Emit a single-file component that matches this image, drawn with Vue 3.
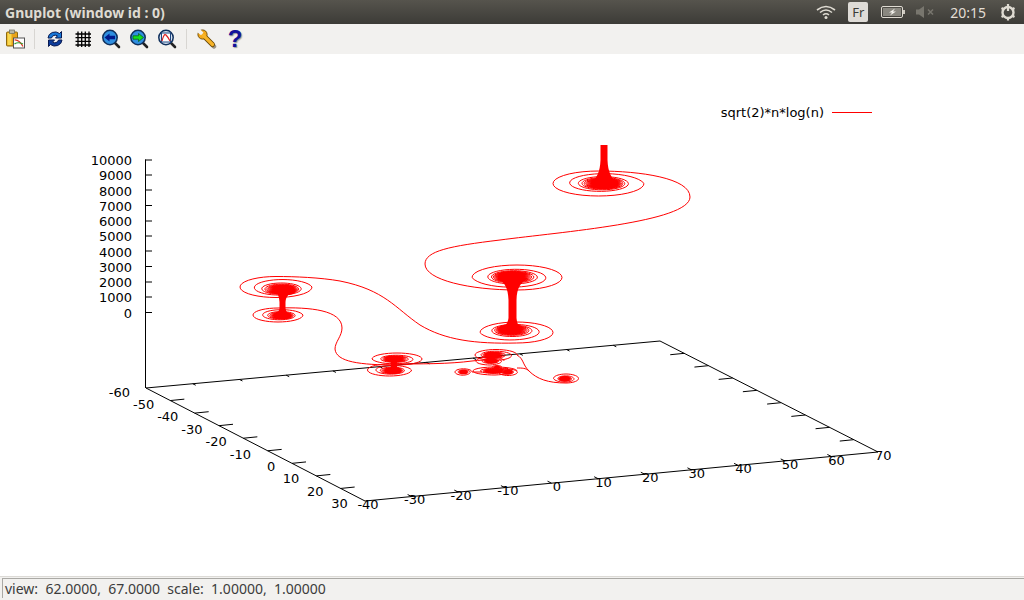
<template>
  <div class="screen">
    <!-- unity top panel -->
    <div class="panel">
      <span class="title">Gnuplot (window id : 0)</span>
      <div class="indicators">
        <svg class="wifi" width="20" height="16" viewBox="0 0 20 16">
          <path d="M1 6 Q10 -1 19 6" />
          <path d="M4 8.500 Q10 3.500 16 8.500" />
          <path d="M7 11 Q10 8.500 13 11" />
          <circle cx="10" cy="13.500" r="1.500" />
        </svg>
        <span class="lang">Fr</span>
        <svg class="battery" width="24" height="14" viewBox="0 0 24 14">
          <rect x="0.500" y="1.500" width="21" height="11" rx="1.500" class="batt-body" />
          <rect x="2" y="3" width="18" height="8" class="batt-fill" />
          <rect x="22" y="5" width="2" height="4" class="batt-tip" />
          <path d="M14 3.500 L8 7.500 L11 7.500 L9 10.500 L15 6.500 L12 6.500 Z" class="batt-bolt" />
        </svg>
        <svg class="sound" width="20" height="14" viewBox="0 0 20 14">
          <path d="M0 4.500 H3 L8 1 V13 L3 9.500 H0 Z" />
          <path d="M12 4.500 L17 9.500 M17 4.500 L12 9.500" class="mute" />
        </svg>
        <span class="clock">20:15</span>
        <svg class="power" width="18" height="18" viewBox="0 0 18 18">
          <circle cx="9" cy="9.500" r="5.500" class="gear-ring" />
          <path d="M9 1 V8 M2.500 5 L4.500 6.200 M15.500 5 L13.500 6.200 M2.500 14 L4.500 12.800 M15.500 14 L13.500 12.800 M9 15 V17.500" class="gear-teeth" />
        </svg>
      </div>
    </div>

    <!-- gnuplot toolbar -->
    <div class="toolbar">
      <button class="tool">
        <svg width="20" height="20" viewBox="0 0 20 20">
          <rect x="1.500" y="3" width="11" height="14" rx="1" fill="#e8a317" stroke="#8a6a10" />
          <rect x="2.500" y="4" width="4" height="12" fill="#f8d850" />
          <rect x="4.500" y="1" width="5" height="3.500" fill="#b8b8a8" stroke="#6a6a5a" stroke-width="0.700" />
          <rect x="8.500" y="9" width="11" height="10" fill="#fff" stroke="#555" />
          <path d="M9.500 11 Q14 10.500 18 17.500" fill="none" stroke="#e03020" stroke-width="1.200" />
          <path d="M9.500 15 Q13 12.500 18 15" fill="none" stroke="#30a030" stroke-width="1.200" />
        </svg>
      </button>
      <span class="sep"></span>
      <button class="tool">
        <svg width="20" height="20" viewBox="0 0 20 20">
          <path d="M3 9 A7 6.500 0 0 1 14.500 4.500 L16.500 2.500 V9 H10.500 L12.500 6.800 A4 4 0 0 0 6.500 9 Z" fill="#1878d8" stroke="#0a1a50" />
          <path d="M17 11 A7 6.500 0 0 1 5.500 15.500 L3.500 17.500 V11 H9.500 L7.500 13.200 A4 4 0 0 0 13.500 11 Z" fill="#0c3c9c" stroke="#0a1a50" />
        </svg>
      </button>
      <button class="tool">
        <svg width="20" height="20" viewBox="0 0 20 20">
          <path d="M5 2.500 V18 M8.700 2.500 V18 M12.300 2.500 V18 M16 2.500 V18 M2.500 5 H18 M2.500 8.700 H18 M2.500 12.300 H18 M2.500 16 H18" fill="none" stroke="#000" stroke-width="1.300" />
        </svg>
      </button>
      <button class="tool" v-for="lens in lenses" :key="lens">
        <svg width="20" height="20" viewBox="0 0 20 20">
          <path d="M13 13 L18 18" stroke="#222" stroke-width="2.600" stroke-linecap="round" />
          <circle cx="9" cy="8.500" r="7.200" :fill="lens === 'view' ? '#d8e4f4' : '#2f8fe0'" stroke="#10305c" stroke-width="1.500" />
          <path v-if="lens === 'back'" d="M3.500 8.500 L8.500 4.500 V6.800 H14 V10.200 H8.500 V12.500 Z" fill="#001a8c" />
          <path v-if="lens === 'forward'" d="M14.500 8.500 L9.500 4.500 V6.800 H4 V10.200 H9.500 V12.500 Z" fill="#12e020" stroke="#0a5a10" stroke-width="0.700" />
          <template v-if="lens === 'view'">
            <rect x="4.500" y="4" width="9" height="9" fill="#fff" stroke="#204880" />
            <path d="M5 12 Q7 4 9 6 T13 12" fill="none" stroke="#e02020" stroke-width="1.200" />
          </template>
        </svg>
      </button>
      <span class="sep"></span>
      <button class="tool">
        <svg width="20" height="20" viewBox="0 0 20 20">
          <path d="M7.500 8 L17 17.500" stroke="#9a9488" stroke-width="4.500" stroke-linecap="round" />
          <path d="M6.500 6.500 L15.500 15.500" stroke="#6a4a08" stroke-width="5" stroke-linecap="round" />
          <circle cx="5.500" cy="5.500" r="4.600" fill="#f4a818" stroke="#6a4a08" stroke-width="0.900" />
          <path d="M6.500 6.500 L15.500 15.500" stroke="#f8b428" stroke-width="3.200" stroke-linecap="round" />
          <path d="M0 1 L3 0 L6.500 3.800 L4 6.200 L0 3 Z" fill="#f2f1ef" />
        </svg>
      </button>
      <button class="tool"><span class="help">?</span></button>
    </div>

    <!-- plot canvas -->
    <div class="plot">
      <svg width="1024" height="522" viewBox="0 54 1024 522">
        <g class="axes">
          <path :d="axesPath" />
        </g>
        <g class="labels">
          <text v-for="t in zLabels" :key="'z' + t.text" :x="132" :y="t.y" text-anchor="end">{{ t.text }}</text>
          <text v-for="t in yLabels" :key="'y' + t.text" :x="t.x" :y="t.y" text-anchor="end">{{ t.text }}</text>
          <text v-for="t in xLabels" :key="'x' + t.text" :x="t.x" :y="t.y" text-anchor="middle">{{ t.text }}</text>
          <text x="824" y="116.500" text-anchor="end">sqrt(2)*n*log(n)</text>
        </g>
        <path class="curve" d="M832 112.500 H872" />
        <g class="blobs">
          <path v-for="(t, i) in towers" :key="'t' + i" :d="t" />
          <ellipse v-for="(b, i) in cores" :key="'c' + i" :cx="b.cx" :cy="b.cy" :rx="b.rx" :ry="b.ry" />
        </g>
        <path class="curve" :d="connectors" />
        <path v-for="(s, i) in spirals" :key="'s' + i" class="curve" :d="s" />
      </svg>
    </div>

    <div class="statusbar">
      <div class="status-inner">{{ statusText }}</div>
    </div>
  </div>
</template>

<script setup>
const lenses = ['back', 'forward', 'view']
const statusText = 'view:  62.0000,  67.0000  scale:  1.00000,  1.00000'

// plot base corners, screen coordinates
const A = [146, 388]
const B = [660, 341]
const C = [878, 452]
const D = [365, 501]

function lerp(p, q, t) {
  return [p[0] + (q[0] - p[0]) * t, p[1] + (q[1] - p[1]) * t]
}

function buildAxes() {
  let d = `M${A} L${B} L${C} L${D} Z M145.500 388 V159.500`
  for (const y of [160, 175, 190, 205.500, 221, 236, 251, 266.500, 282, 297, 312.500]) {
    d += ` M145 ${y} H152`
  }
  for (let k = 1; k < 9; k++) {
    const p = lerp(A, D, k / 9)
    d += ` M${p} l14 -1.400`
    const q = lerp(B, C, k / 9)
    d += ` M${q} l-14 1.400`
  }
  for (let k = 1; k < 11; k++) {
    const p = lerp(D, C, k / 11)
    d += ` M${p} l-4 -2`
    const q = lerp(A, B, k / 11)
    d += ` M${q} l3 1.500`
  }
  return d
}
const axesPath = buildAxes()

const zLabels = [10000, 9000, 8000, 7000, 6000, 5000, 4000, 3000, 2000, 1000, 0].map((n, i) => ({
  text: n,
  y: 165 + i * 15.25
}))
const yLabels = [-60, -50, -40, -30, -20, -10, 0, 10, 20, 30].map((n, i) => ({
  text: n,
  x: 130 + i * 24.2,
  y: 396.500 + i * 12.4
}))
const xLabels = [-40, -30, -20, -10, 0, 10, 20, 30, 40, 50, 60, 70].map((n, i) => ({
  text: n,
  x: 368 + i * 46.6 + (n >= 0 ? 2.600 : 0),
  y: 508.500 - i * 4.4
}))

// outer ring stays nearly closed, then the curve winds in quickly
function shrink(n) {
  if (n < 0.75) return 1
  return Math.pow(1 + 5 * (n - 0.75), -0.3)
}

// shrinking ellipse, starts on the outer ring at angle a0 (degrees)
function spiral({ cx, cy, R, ry, a0, dx = 0, dy = 0, turns = 40 }) {
  const steps = turns * 36
  let d = ''
  for (let i = 0; i <= steps; i++) {
    const n = i / 36
    const f = shrink(n)
    const a = (a0 * Math.PI) / 180 + 2 * Math.PI * n
    const s = 1 - f
    const x = cx + dx * s + R * f * Math.cos(a)
    const y = cy + dy * s - ry * f * Math.sin(a)
    d += (i ? 'L' : 'M') + x.toFixed(2) + ' ' + y.toFixed(2)
  }
  return d
}

const rings = [
  { cx: 598.5, cy: 183.5, R: 45.5, ry: 12.5, a0: 90, dx: 8, dy: 0 },
  { cx: 517, cy: 277.5, R: 45, ry: 12.5, a0: 270, dx: -7, dy: -1 },
  { cx: 516.5, cy: 332.5, R: 36.5, ry: 10.5, a0: 270, dx: -8, dy: -4 },
  { cx: 276, cy: 287, R: 36, ry: 10.5, a0: 90, dx: 10, dy: 4 },
  { cx: 278, cy: 315, R: 25, ry: 7, a0: 90, dx: 6, dy: 1 },
  { cx: 397, cy: 359, R: 25, ry: 6, a0: 270, dx: -4, dy: 0 },
  { cx: 389.5, cy: 370, R: 22, ry: 6, a0: 90, dx: 5, dy: 1 },
  { cx: 496, cy: 355, R: 21, ry: 5.5, a0: 0, dx: -5, dy: 0 },
  { cx: 490, cy: 361, R: 14, ry: 4, a0: 0, dx: 2, dy: 0 },
  { cx: 566, cy: 378.5, R: 12.5, ry: 4.5, a0: 270, dx: -2, dy: 0.500 },
  { cx: 463.5, cy: 372, R: 8.5, ry: 3.2, a0: 0 },
  { cx: 495, cy: 371, R: 22, ry: 4, a0: 0, dx: -2 },
  { cx: 508, cy: 372, R: 9.5, ry: 3.5, a0: 90 },
  { cx: 497, cy: 367.5, R: 5, ry: 2, a0: 0 }
]
const spirals = rings.map(spiral)
const cores = rings.map((r) => ({
  cx: r.cx + (r.dx || 0),
  cy: r.cy + (r.dy || 0),
  rx: r.R * 0.26,
  ry: r.ry * 0.4
}))

const connectors = [
  'M598.5 171 C640 171 690 178 690 197 C690 222 560 232 500 240 C450 246 425 251 425 264 C425 280 470 290 517 290',
  'M516.5 343 C475 344 445 340 420 325 C395 308 385 290 340 281 C320 277.500 295 276.500 276 276.500',
  'M278 308 C310 307 342 310 342 328 C342 336 335 342 335 349 C336 362 360 365 397 365',
  'M389.5 364 C420 364 450 364 472 361 C480 360 485 360 490 360',
  'M517 355 C524 359 522 364 529 371 C537 379 548 383 566 383',
  'M472 372 H482 M517 368 C522 368 526 368 529 371'
].join(' ')

const towers = [
  // top spike
  'M600.5 145 H607.5 V160 C608 172 611 178 618 184 H590 C597 178 600 172 600.5 160 Z',
  // middle column
  'M498 278 H528 C520 283 517 288 516.5 300 V318 C517 324 519 327 524 330 H498 C504 327 508 324 508.5 318 V300 C508 288 505 283 498 278 Z',
  // left column
  'M274 291 H296 C289 293 286 296 285.5 302 V308 C286 312 288 314 292 316 H272 C276 314 279 312 279.5 308 V302 C279 296 278 293 274 291 Z',
  // lower stacks
  'M388 358 H402 C398 360 397 362 397 365 C397 368 398 370 401 372 H385 C389 370 391 368 391 365 C391 362 390 360 388 358 Z',
  'M486 355 H498 C496 357 495 358 495 360 H487 C487 358 487 357 486 355 Z'
]
</script>

<style scoped>
.screen {
  width: 1024px;
  height: 600px;
  display: flex;
  flex-direction: column;
  overflow: hidden;
  background: #fff;
  font-family: "Noto Sans", "Open Sans", sans-serif;
}

.panel {
  height: 24px;
  flex: none;
  display: flex;
  align-items: center;
  justify-content: space-between;
  padding-left: 5px;
  background: linear-gradient(#56544d, #3c3b37);
  color: #dfdbd2;
}

.title {
  font-size: 14px;
  font-weight: 700;
  white-space: pre;
}

.indicators {
  display: flex;
  align-items: center;
  padding-right: 7px;
}

.wifi {
  margin-right: 12px;
}

.wifi path {
  fill: none;
  stroke: #dfdbd2;
  stroke-width: 1.6;
}

.wifi circle {
  fill: #dfdbd2;
}

.lang {
  width: 20px;
  height: 20px;
  border-radius: 2px;
  background: #dfdcd7;
  color: #3c3b37;
  font-size: 13px;
  line-height: 20px;
  text-align: center;
  margin-right: 13px;
}

.batt-body {
  fill: none;
  stroke: #dfdbd2;
}

.batt-fill {
  fill: #8a8880;
}

.batt-tip {
  fill: #cfcbc2;
}

.batt-bolt {
  fill: #f2f0ea;
}

.battery {
  margin-right: 11px;
}

.sound {
  margin-right: 14px;
  fill: #78766e;
}

.mute {
  fill: none;
  stroke: #78766e;
  stroke-width: 1.5;
}

.clock {
  font-size: 14px;
  margin-right: 13px;
  color: #e2ddd4;
}

.gear-ring {
  fill: none;
  stroke: #dfdbd2;
  stroke-width: 2.4;
}

.gear-teeth {
  fill: none;
  stroke: #dfdbd2;
  stroke-width: 2.2;
}

.toolbar {
  height: 30px;
  flex: none;
  display: flex;
  align-items: center;
  padding-left: 1px;
  background: #f2f1ef;
}

.tool {
  width: 28px;
  height: 30px;
  padding: 0;
  border: none;
  background: none;
  display: flex;
  align-items: center;
  justify-content: center;
}

.sep {
  width: 1px;
  height: 20px;
  margin: 0 6px 0 5px;
  background: #d8d6d2;
}

.help {
  font-family: "Liberation Sans", sans-serif;
  font-size: 24px;
  font-weight: 700;
  color: #12129a;
  text-shadow: 1px 1px 1px #9a9a9a;
}

.plot {
  flex: 1;
  background: #fff;
}

.plot svg {
  display: block;
}

.axes path {
  fill: none;
  stroke: #000;
  stroke-width: 1;
}

.labels text {
  font-family: "DejaVu Sans", sans-serif;
  font-size: 13px;
  fill: #000;
}

.curve {
  fill: none;
  stroke: #f00;
  stroke-width: 1;
}

.blobs path,
.blobs ellipse {
  fill: #f00;
}

.statusbar {
  height: 24px;
  flex: none;
  box-sizing: border-box;
  padding: 1px 0 2px 2px;
  background: #f2f1ef;
  border-top: 1px solid #dcdad6;
}

.status-inner {
  height: 100%;
  box-sizing: border-box;
  padding-left: 2px;
  border-top: 1px solid #aaa9a5;
  border-left: 1px solid #aaa9a5;
  font-size: 14px;
  line-height: 20px;
  color: #3c3c3c;
  white-space: pre;
}
</style>

<style>
html,
body {
  margin: 0;
  overflow: hidden;
}
</style>
